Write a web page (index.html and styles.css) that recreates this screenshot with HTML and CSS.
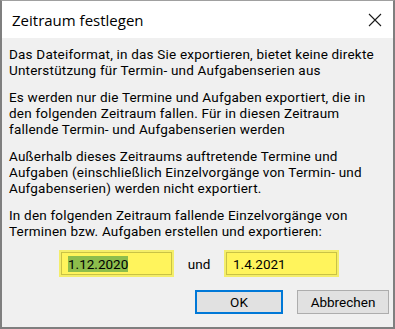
FILE: index.html
```html
<!DOCTYPE html>
<html lang="de">
<head>
<meta charset="utf-8">
<title>Zeitraum festlegen</title>
<link rel="stylesheet" href="styles.css">
</head>
<body>
<div class="dialog">
  <div class="titlebar">
    <span class="title">Zeitraum festlegen</span>
    <svg class="close" width="14" height="14" viewBox="0 0 14 14"><path d="M1 1 L13 13 M13 1 L1 13" stroke="#1a1a1a" stroke-width="1.1" fill="none"/></svg>
  </div>
  <div class="content">
    <p class="para">Das Dateiformat, in das Sie exportieren, bietet keine direkte<br>Unterstützung für Termin- und Aufgabenserien aus</p>
    <p class="para">Es werden nur die Termine und Aufgaben exportiert, die in<br>den folgenden Zeitraum fallen. Für in diesen Zeitraum<br>fallende Termin- und Aufgabenserien werden</p>
    <p class="para">Außerhalb dieses Zeitraums auftretende Termine und<br>Aufgaben (einschließlich Einzelvorgänge von Termin- und<br>Aufgabenserien) werden nicht exportiert.</p>
    <p class="para">In den folgenden Zeitraum fallende Einzelvorgänge von<br>Terminen bzw. Aufgaben erstellen und exportieren:</p>
    <div class="range">
      <div class="field"><span class="sel">1.12.2020</span></div>
      <span class="und">und</span>
      <div class="field"><span>1.4.2021</span></div>
    </div>
    <div class="buttons">
      <div class="btn btn-default">OK</div>
      <div class="btn">Abbrechen</div>
    </div>
  </div>
</div>
</body>
</html>
```
FILE: styles.css
```css
html, body {
  margin: 0;
  padding: 0;
  background: #f0f0f0;
}
body {
  font-family: Roboto, "Open Sans", sans-serif;
  font-size: 13.5px;
  color: #000;
}
.dialog {
  width: 395px;
  height: 329px;
  box-sizing: border-box;
  border: 1px solid #7f7f7f;
  border-top-color: #a0a0a0;
  border-width: 1px 2px 2px 2px;
  background: #f0f0f0;
  display: flex;
  flex-direction: column;
}
.titlebar {
  height: 37px;
  background: #fff;
  display: flex;
  align-items: center;
  justify-content: space-between;
  padding: 0 11px 0 10px;
  flex-shrink: 0;
}
.title {
  font-family: "Open Sans", sans-serif;
  font-size: 15px;
  color: #000;
}
.close {
  display: block;
}
.content {
  padding: 8px 0 0 7px;
}
.para {
  margin: 0 0 11px 0;
  line-height: 16px;
  letter-spacing: 0.2px;
  white-space: nowrap;
}
.range {
  display: flex;
  align-items: center;
  margin-top: 3px;
  padding-left: 50px;
}
.field {
  width: 115px;
  height: 27px;
  box-sizing: border-box;
  background: #fff45c;
  border: 2px solid #f4ee6a;
  outline: 1px solid #c9c246;
  outline-offset: -3px;
  display: flex;
  align-items: center;
  padding-left: 7px;
}
.sel {
  background: #8dbd4c;
  line-height: 16px;
}
.und {
  width: 50px;
  text-align: center;
}
.buttons {
  display: flex;
  justify-content: flex-end;
  gap: 14px;
  margin-top: 13px;
  padding-right: 4px;
}
.btn {
  width: 92px;
  height: 24px;
  box-sizing: border-box;
  background: #e1e1e1;
  border: 1px solid #adadad;
  display: flex;
  align-items: center;
  justify-content: center;
}
.btn-default {
  width: 88px;
  border: 2px solid #0078d7;
}
```
